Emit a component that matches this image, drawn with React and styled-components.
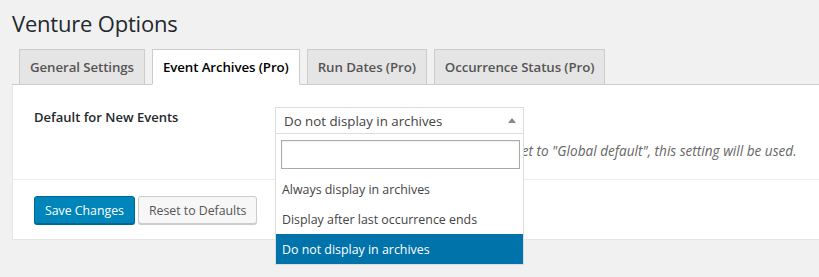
import React from 'react'
import styled, { createGlobalStyle } from 'styled-components'

const Global = createGlobalStyle`
    html {
        overflow: hidden;
    }
    html, body {
        margin: 0;
        padding: 0;
        background: #f1f1f1;
    }
    body {
        font-family: "Open Sans", "Noto Sans", sans-serif;
        color: #444;
        min-height: 277px;
    }
`

const Wrap = styled.div`
    padding: 0 0 0 12px;
    width: 840px;
`

const Title = styled.h1`
    margin: 0;
    padding: 9px 0 0;
    font-size: 22px;
    font-weight: 400;
    line-height: 29px;
    color: #23282d;
    letter-spacing: -0.2px;
`

const TabBar = styled.div`
    display: flex;
    align-items: flex-end;
    height: 47px;
    box-sizing: border-box;
    border-bottom: 1px solid #ccc;
    padding-left: 7px;
    gap: 7px;
`

const Tab = styled.div`
    box-sizing: border-box;
    height: ${p => (p.active ? '36px' : '35px')};
    margin-bottom: ${p => (p.active ? '-1px' : '0')};
    padding: 0 10px;
    display: flex;
    align-items: center;
    border: 1px solid #ccc;
    border-bottom: ${p => (p.active ? '1px solid #fff' : 'none')};
    background: ${p => (p.active ? '#fff' : '#e5e5e5')};
    color: ${p => (p.active ? '#000' : '#555')};
    font-size: 13.3px;
    font-weight: 600;
    white-space: nowrap;
    letter-spacing: -0.1px;
`

const Panel = styled.div`
    background: #fff;
    border: 1px solid #e5e5e5;
    border-top: none;
    height: 155px;
    box-sizing: border-box;
`

const Row = styled.div`
    display: flex;
    padding: 20px 0 0 21px;
    height: 95px;
    box-sizing: border-box;
    border-bottom: 1px solid #eee;
`

const Label = styled.div`
    width: 241px;
    font-size: 13px;
    font-weight: 600;
    color: #23282d;
    padding-top: 3px;
`

const Field = styled.div`
    position: relative;
    margin-top: 2px;
`

const Select = styled.div`
    width: 249px;
    height: 27px;
    box-sizing: border-box;
    border: 1px solid #ddd;
    background: #fff;
    display: flex;
    align-items: center;
    justify-content: space-between;
    padding: 0 7px 0 8px;
    font-size: 13.3px;
    color: #444;
`

const Arrow = styled.span`
    width: 0;
    height: 0;
    border-left: 4px solid transparent;
    border-right: 4px solid transparent;
    border-bottom: 5px solid #888;
`

const Description = styled.p`
    margin: 7px 0 0;
    font-size: 13.6px;
    font-style: italic;
    color: #666;
    white-space: nowrap;
`

const Dropdown = styled.div`
    position: absolute;
    top: 27px;
    left: 0;
    width: 249px;
    box-sizing: border-box;
    background: #fff;
    border: 1px solid #ddd;
    border-top: none;
`

const SearchBox = styled.div`
    padding: 6px 3px 5px 5px;
`

const Search = styled.div`
    height: 29px;
    box-sizing: border-box;
    border: 1px solid #aaa;
    box-shadow: inset 0 1px 2px rgba(0, 0, 0, 0.07);
`

const Option = styled.div`
    height: 30px;
    display: flex;
    align-items: center;
    padding-left: 6px;
    font-size: 12.4px;
    color: ${p => (p.selected ? '#fff' : '#444')};
    background: ${p => (p.selected ? '#0073aa' : 'transparent')};
`

const Actions = styled.div`
    display: flex;
    gap: 3px;
    padding: 16px 0 0 21px;
`

const Button = styled.div`
    height: 28px;
    box-sizing: border-box;
    padding: 0 10px;
    display: flex;
    align-items: center;
    border-radius: 3px;
    font-size: 12.3px;
    border: 1px solid ${p => (p.primary ? '#006799' : '#ccc')};
    background: ${p => (p.primary ? '#0085ba' : '#f7f7f7')};
    color: ${p => (p.primary ? '#fff' : '#555')};
    box-shadow: ${p => (p.primary ? '0 1px 0 #006799' : '0 1px 0 #ccc')};
`

const tabs = ['General Settings', 'Event Archives (Pro)', 'Run Dates (Pro)', 'Occurrence Status (Pro)']

const options = ['Always display in archives', 'Display after last occurrence ends', 'Do not display in archives']

const App = () => (
    <Wrap>
        <Global />
        <Title>Venture Options</Title>
        <TabBar>
            {tabs.map((t, i) => (
                <Tab key={t} active={i === 1}>{t}</Tab>
            ))}
        </TabBar>
        <Panel>
            <Row>
                <Label>Default for New Events</Label>
                <Field>
                    <Select>
                        Do not display in archives
                        <Arrow />
                    </Select>
                    <Description>If an individual event&apos;s archive setting is set to "Global default", this setting will be used.</Description>
                    <Dropdown>
                        <SearchBox>
                            <Search />
                        </SearchBox>
                        {options.map((o, i) => (
                            <Option key={o} selected={i === 2}>{o}</Option>
                        ))}
                    </Dropdown>
                </Field>
            </Row>
            <Actions>
                <Button primary>Save Changes</Button>
                <Button>Reset to Defaults</Button>
            </Actions>
        </Panel>
    </Wrap>
)

export default App
